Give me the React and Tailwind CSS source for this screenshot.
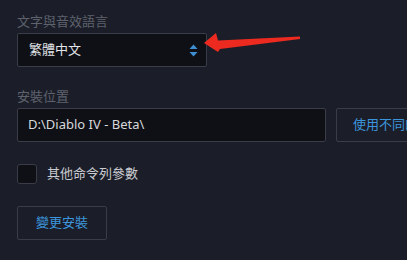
import React from "react";

const font = { fontFamily: '"Noto Sans", "Noto Sans CJK TC", sans-serif' };

const SortIcon = () => (
  <svg width="9" height="13" viewBox="0 0 9 13" className="shrink-0">
    <path d="M4.5 0.5 L8.5 5 L0.5 5 Z" fill="#3d8fd1" />
    <path d="M4.5 12.5 L8.5 8 L0.5 8 Z" fill="#3d8fd1" />
  </svg>
);

const RedArrow = () => (
  <svg
    className="absolute left-0 top-0 pointer-events-none"
    width="407"
    height="260"
    viewBox="0 0 407 260"
  >
    <polygon
      points="204,43 216,33 218,40.5 300,36.5 300,39 220,49 218,52"
      fill="#ec2a1f"
    />
  </svg>
);

export default function App() {
  return (
    <div
      className="relative w-[407px] h-[260px] overflow-hidden bg-[#1b1e28] pl-[17px] pt-[13px]"
      style={font}
    >
      <div className="text-[13px] leading-[16px] text-[#5e626d]">文字與音效語言</div>

      <div className="mt-[4px] flex items-center justify-between w-[190px] h-[34px] bg-[#0e1016] border border-[#3a3d47] rounded-[2px] pl-[11px] pr-[8px]">
        <span className="text-[13px] text-[#e4e5e8]">繁體中文</span>
        <SortIcon />
      </div>

      <div className="mt-[21px] text-[13px] leading-[16px] text-[#5e626d]">安裝位置</div>

      <div className="mt-[4px] flex gap-[10px]">
        <div className="flex items-center w-[309px] h-[34px] shrink-0 bg-[#0e1016] border border-[#3a3d47] rounded-[2px] pl-[10px]">
          <span className="text-[13px] text-[#d6d8dc]">D:\Diablo IV - Beta\</span>
        </div>
        <button className="flex items-center h-[34px] shrink-0 border border-[#3a3d47] rounded-[2px] px-[16px] text-[13px] text-[#3c95dc] whitespace-nowrap">
          使用不同的資料夾
        </button>
      </div>

      <div className="mt-[22px] flex items-center gap-[10px]">
        <div className="w-[20px] h-[20px] bg-[#0e1016] border border-[#3a3d47] rounded-[3px]" />
        <span className="text-[13px] text-[#c9cbd0]">其他命令列參數</span>
      </div>

      <button className="mt-[22px] flex items-center justify-center w-[90px] h-[34px] border border-[#3a3d47] rounded-[2px] text-[13px] text-[#3c95dc]">
        變更安裝
      </button>

      <RedArrow />
    </div>
  );
}
